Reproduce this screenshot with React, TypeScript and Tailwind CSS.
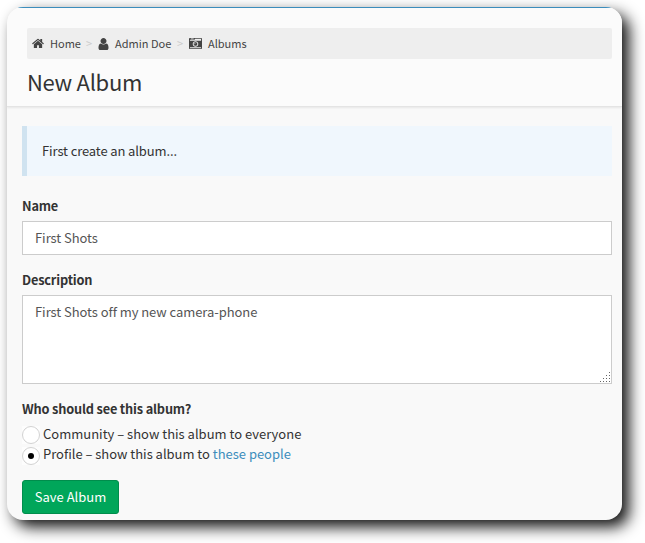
import React from "react";

function Icon({ d, box, className }: { d: string; box: string; className: string }) {
  return (
    <svg viewBox={box} className={`shrink-0 ${className}`} fill="currentColor" aria-hidden="true">
      <path d={d} />
    </svg>
  );
}

const HOME =
  "M1408 992v480q0 26-19 45t-45 19h-384v-384h-256v384h-384q-26 0-45-19t-19-45v-480q0-1 .5-3t.5-3l575-474 575 474q1 2 1 6zm223-69l-62 74q-8 9-21 11h-3q-13 0-21-7l-692-577-692 577q-12 8-24 7-13-2-21-11l-62-74q-8-10-7-23.5t11-21.5l719-599q32-26 76-26t76 26l244 204v-195q0-14 9-23t23-9h192q14 0 23 9t9 23v408l219 182q10 8 11 21.5t-7 23.5z";
const USER =
  "M1536 1399q0 109-62.5 187t-150.5 78h-854q-88 0-150.5-78t-62.5-187q0-85 8.5-160.5t31.5-152 58.5-131 94-89 134.5-34.5q131 128 313 128t313-128q76 0 134.5 34.5t94 89 58.5 131 31.5 152 8.5 160.5zm-256-887q0 159-112.5 271.5t-271.5 112.5-271.5-112.5-112.5-271.5 112.5-271.5 271.5-112.5 271.5 112.5 112.5 271.5z";
const CAMERA =
  "M928 832q0-14-9-23t-23-9q-66 0-113 47t-47 113q0 14 9 23t23 9 23-9 9-23q0-40 28-68t68-28q14 0 23-9t9-23zm224 130q0 106-75 181t-181 75-181-75-75-181 75-181 181-75 181 75 75 181zm-1024 574h1536v-128h-1536v128zm1152-574q0-159-112.5-271.5t-271.5-112.5-271.5 112.5-112.5 271.5 112.5 271.5 271.5 112.5 271.5-112.5 112.5-271.5zm-1024-642h384v-128h-384v128zm-128 192h1536v-256h-828l-64 128h-644v128zm1664-256v1280q0 53-37.5 90.5t-90.5 37.5h-1536q-53 0-90.5-37.5t-37.5-90.5v-1280q0-53 37.5-90.5t90.5-37.5h1536q53 0 90.5 37.5t37.5 90.5z";

function Radio({ on = false }: { on?: boolean }) {
  return (
    <span className="flex h-[18px] w-[18px] shrink-0 items-center justify-center bg-[#fdfdfd]">
      <span className="flex h-[18px] w-[18px] items-center justify-center rounded-full border border-[#d2d2d2] bg-white">
        {on && <span className="h-1.5 w-1.5 rounded-full bg-black" />}
      </span>
    </span>
  );
}

export default function App() {
  return (
    <div className="h-[543px] w-[645px] overflow-hidden bg-white p-[7px] font-['Noto_Sans_CJK_SC',sans-serif] text-[13px] text-[#333]">
      <div className="h-[513px] w-[615px] overflow-hidden rounded-2xl bg-[#f9f9f9] shadow-[7px_7px_15px_#111]">
        <header className="h-[100px] border-t border-b border-t-[#3c8dbc] border-b-[#e4e4e4] bg-[#fbfbfb] pt-5 pr-2.5 pl-5 shadow-[0_1px_2px_rgba(0,0,0,0.08)]">
          <nav className="flex h-[31px] items-center rounded-xs bg-[#eee] pl-[5px] text-[11px] text-[#444]">
            <Icon d={HOME} box="0 0 1664 1792" className="mr-[6px] h-[13px] w-3" />
            <span className="w-[36px] whitespace-nowrap">Home</span>
            <span className="w-[12px] text-[#ccc]">&gt;</span>
            <Icon d={USER} box="256 0 1280 1792" className="mr-[6px] h-[14px] w-[11px]" />
            <span className="w-[62px] whitespace-nowrap">Admin Doe</span>
            <span className="w-[12px] text-[#ccc]">&gt;</span>
            <Icon d={CAMERA} box="0 0 1792 1792" className="mr-[6px] h-[13px] w-[13px]" />
            <span>Albums</span>
          </nav>
          <h1 className="mt-[6px] text-[22px] leading-8 tracking-[-0.3px]">New Album</h1>
        </header>
        <main className="pt-[19px] pr-2.5 pl-[15px]">
          <div className="flex h-[50px] items-center border-l-[5px] border-[#d0e3f0] bg-[#f0f7fd] pl-[15px] tracking-[-0.12px]">
            First create an album...
          </div>
          <label className="mt-5 block h-[25px] text-[12.75px] font-bold leading-5 tracking-[-0.17px]">Name</label>
          <div className="flex h-[34px] items-center border border-[#ccc] bg-white pl-3 tracking-[-0.06px] text-[#555]">
            First Shots
          </div>
          <label className="mt-[15px] block h-[25px] text-[12.75px] font-bold leading-5 tracking-[-0.17px]">Description</label>
          <div className="flex h-[89px] justify-between border border-[#ccc] bg-white pt-1.5 pl-3 leading-5 tracking-[-0.06px] text-[#555]">
            <span>First Shots off my new camera-phone</span>
            <svg className="h-[11px] w-[11px] self-end" viewBox="0 0 11 11" fill="#666" shapeRendering="crispEdges">
              <path d="M9 0h1v1h-1zM6 3h1v1h-1zM9 3h1v1h-1zM3 6h1v1h-1zM6 6h1v1h-1zM9 6h1v1h-1zM0 9h1v1h-1zM3 9h1v1h-1zM6 9h1v1h-1zM9 9h1v1h-1z" />
            </svg>
          </div>
          <p className="mt-[15px] h-[27px] text-[12.75px] font-bold leading-5 tracking-[-0.17px]">Who should see this album?</p>
          <div className="flex h-[21px] gap-[3px] leading-4">
            <Radio />
            <span>Community – show this album to everyone</span>
          </div>
          <div className="flex h-[33px] gap-[3px] leading-[14px] tracking-[-0.02px]">
            <Radio on />
            <span>
              Profile – show this album to <a className="text-[#3c8dbc]">these people</a>
            </span>
          </div>
          <button className="h-[34px] w-[97px] rounded-[3px] border border-[#008d4c] bg-[#00a65a] text-white">
            Save Album
          </button>
        </main>
      </div>
    </div>
  );
}
